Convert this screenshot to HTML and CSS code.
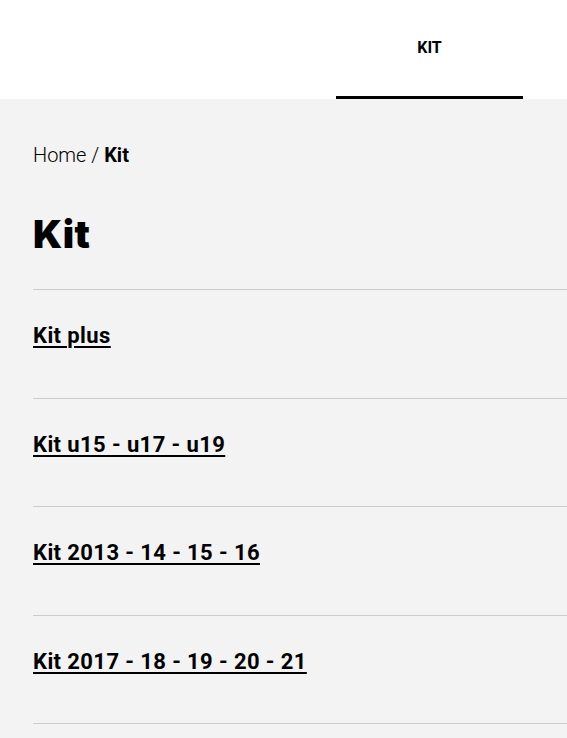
FILE: index.html
```html
<!DOCTYPE html>
<html lang="it">
<head>
<meta charset="utf-8">
<link rel="stylesheet" href="styles.css">
</head>
<body>
<header class="topbar">
  <nav class="tabs">
    <a class="tab active" href="#">KIT</a>
  </nav>
</header>
<main class="content">
  <div class="breadcrumb"><a href="#">Home</a> <span class="sep">/</span> <strong>Kit</strong></div>
  <h1 class="title">Kit</h1>
  <ul class="list">
    <li class="item"><a href="#">Kit plus</a></li>
    <li class="item"><a href="#">Kit u15 - u17 - u19</a></li>
    <li class="item"><a href="#">Kit 2013 - 14 - 15 - 16</a></li>
    <li class="item"><a href="#">Kit 2017 - 18 - 19 - 20 - 21</a></li>
  </ul>
</main>
</body>
</html>
```
FILE: styles.css
```css
* { box-sizing: border-box; }
html, body { margin: 0; padding: 0; }
body {
  background: #f3f3f3;
  font-family: Roboto, "Liberation Sans", sans-serif;
  color: #000;
  overflow: hidden;
  height: 738px;
}
.topbar {
  background: #fff;
  height: 99px;
  display: flex;
  justify-content: flex-end;
}
.tabs { display: flex; margin-right: 44px; }
.tab {
  width: 187px;
  display: flex;
  justify-content: center;
  padding-top: 38px;
  font-size: 16px;
  font-weight: 700;
  color: #000;
  text-decoration: none;
  border-bottom: 3px solid transparent;
}
.tab.active { border-bottom-color: #000; }
.content { padding: 0 0 0 33px; }
.breadcrumb {
  padding-top: 44px;
  font-size: 20px;
  font-weight: 300;
  line-height: 24px;
}
.breadcrumb a { color: #000; text-decoration: none; }
.breadcrumb strong { font-weight: 700; }
.title {
  margin: 44px 0 0;
  font-family: Inter, sans-serif;
  font-weight: 900;
  font-size: 38.5px;
  line-height: 46px;
  letter-spacing: 0.5px;
}
.list { list-style: none; margin: 32px 0 0; padding: 0; }
.item {
  border-top: 1px solid #cccccc;
  padding: 33px 0 49.5px;
  font-size: 22px;
  font-weight: 700;
  line-height: 25px;
  letter-spacing: 0.4px;
}
.item:last-child { border-bottom: 1px solid #cccccc; }
.item a { color: #000; text-decoration: underline; text-underline-offset: 3px; text-decoration-thickness: 2px; }
```
